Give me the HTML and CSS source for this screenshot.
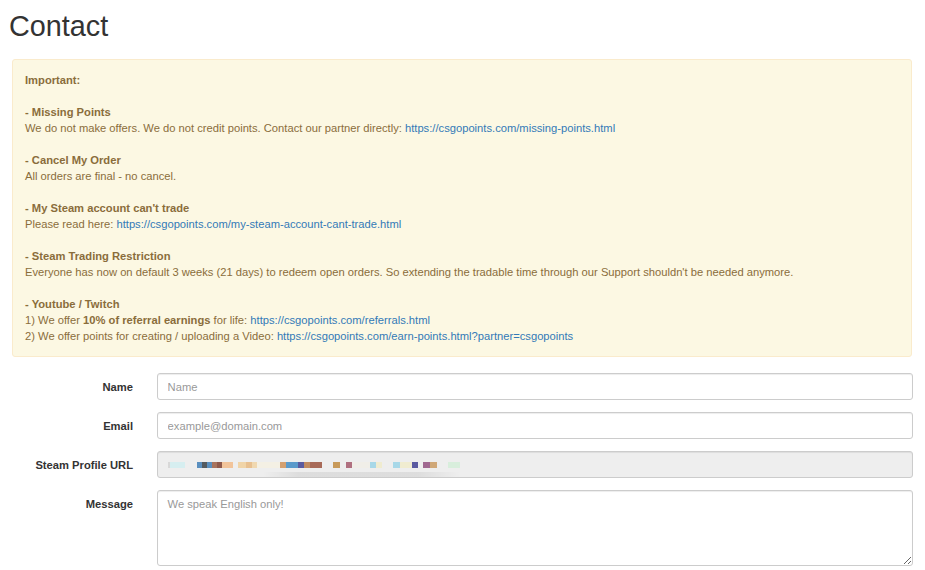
FILE: index.html
```html
<!DOCTYPE html>
<html lang="en">
<head>
<meta charset="utf-8">
<title>Contact</title>
<link rel="stylesheet" href="styles.css">
</head>
<body>
<div class="page">
  <h1 class="title">Contact</h1>
  <div class="alert">
    <div class="section"><strong>Important:</strong></div>
    <div class="section">
      <strong>- Missing Points</strong><br>
      We do not make offers. We do not credit points. Contact our partner directly: <a href="#">https://csgopoints.com/missing-points.html</a>
    </div>
    <div class="section">
      <strong>- Cancel My Order</strong><br>
      All orders are final - no cancel.
    </div>
    <div class="section">
      <strong>- My Steam account can't trade</strong><br>
      Please read here: <a href="#">https://csgopoints.com/my-steam-account-cant-trade.html</a>
    </div>
    <div class="section">
      <strong>- Steam Trading Restriction</strong><br>
      Everyone has now on default 3 weeks (21 days) to redeem open orders. So extending the tradable time through our Support shouldn't be needed anymore.
    </div>
    <div class="section">
      <strong>- Youtube / Twitch</strong><br>
      1) We offer <strong>10% of referral earnings</strong> for life: <a href="#">https://csgopoints.com/referrals.html</a><br>
      2) We offer points for creating / uploading a Video: <a href="#">https://csgopoints.com/earn-points.html?partner=csgopoints</a>
    </div>
  </div>

  <form class="form">
    <div class="row">
      <label class="label" for="name">Name</label>
      <input class="control" id="name" type="text" placeholder="Name">
    </div>
    <div class="row">
      <label class="label" for="email">Email</label>
      <input class="control" id="email" type="text" placeholder="example@domain.com">
    </div>
    <div class="row">
      <label class="label">Steam Profile URL</label>
      <div class="control disabled"><span class="blurred"></span></div>
    </div>
    <div class="row">
      <label class="label" for="msg">Message</label>
      <textarea class="control area" id="msg" placeholder="We speak English only!"></textarea>
    </div>
  </form>
</div>
</body>
</html>
```
FILE: styles.css
```css
* { box-sizing: border-box; }
html, body { margin: 0; padding: 0; background: #fff; }
body {
  font-family: "Liberation Sans", Arial, sans-serif;
  font-size: 11.2px;
  line-height: 16px;
  color: #333;
}
.page {
  padding: 0 13px 0 12px;
  width: 925px;
}
.title {
  margin: 10px 0 17px -3px;
  font-size: 28.8px;
  line-height: 32px;
  font-weight: 400;
  color: #333;
}
.alert {
  width: 900px;
  background: #fcf8e3;
  border: 1px solid #faebcc;
  border-radius: 3px;
  color: #8a6d3b;
  padding: 12px;
  margin-bottom: 16px;
}
.section + .section { margin-top: 16px; }
.alert strong { font-weight: 700; }
.alert a { color: #337ab7; text-decoration: none; }

.form { width: 901px; }
.row {
  display: grid;
  grid-template-columns: 121px 1fr;
  column-gap: 24px;
  margin-bottom: 12px;
}
.label {
  text-align: right;
  font-weight: 700;
  padding-top: 5.6px;
  line-height: 16px;
  color: #333;
}
.control {
  display: block;
  width: 100%;
  height: 27px;
  padding: 4.8px 9.6px;
  font-family: inherit;
  font-size: 11.2px;
  line-height: 16px;
  color: #555;
  background: #fff;
  border: 1px solid #ccc;
  border-radius: 3px;
  box-shadow: inset 0 1px 1px rgba(0,0,0,.075);
  margin: 0;
}
.control::placeholder { color: #999; }
.disabled {
  background: #eee;
  display: flex;
  align-items: flex-start;
}
.area {
  height: 76px;
  resize: vertical;
}
.blurred {
  display: block;
  width: 292px;
  height: 16px;
  margin-top: 5px;
  background-repeat: no-repeat;
  background-size: 292px 6px, 292px 5px;
  background-position: 0 0, 0 10px;
  background-image:
    linear-gradient(to right,
    #d8d8d8 0 2px, #d6eef0 2px 17px, transparent 17px 29px,
    #5a8fbf 29px 34px, #555b60 34px 39px, #5a8fbf 39px 44px, #a8745e 44px 49px, #8f5a4c 49px 54px,
    #f2c49a 54px 65px, transparent 65px 70px,
    #f0d4a8 70px 78px, #e8c090 78px 84px, #f0d8b0 84px 89px, #f4f0e4 89px 112px,
    #d4a070 112px 118px, #5a9acb 118px 130px, #5a5ba0 130px 136px, #c08a60 136px 142px, #a86a58 142px 154px,
    transparent 154px 165px, #c89a5a 165px 172px, transparent 172px 178px, #b07080 178px 184px,
    #f0eee8 184px 202px, #a8d8e8 202px 208px, #f0ecd0 208px 214px, transparent 214px 225px,
    #a8d8e8 225px 232px, #f0ecd0 232px 244px, #5a5aa0 244px 250px, transparent 250px 255px,
    #a06890 255px 262px, #d0a878 262px 269px, transparent 269px 280px, #d8eedc 280px 292px),
    linear-gradient(to right, transparent 95px, rgba(0,0,0,.07) 130px, rgba(0,0,0,.07) 250px, transparent 292px);
}
```
